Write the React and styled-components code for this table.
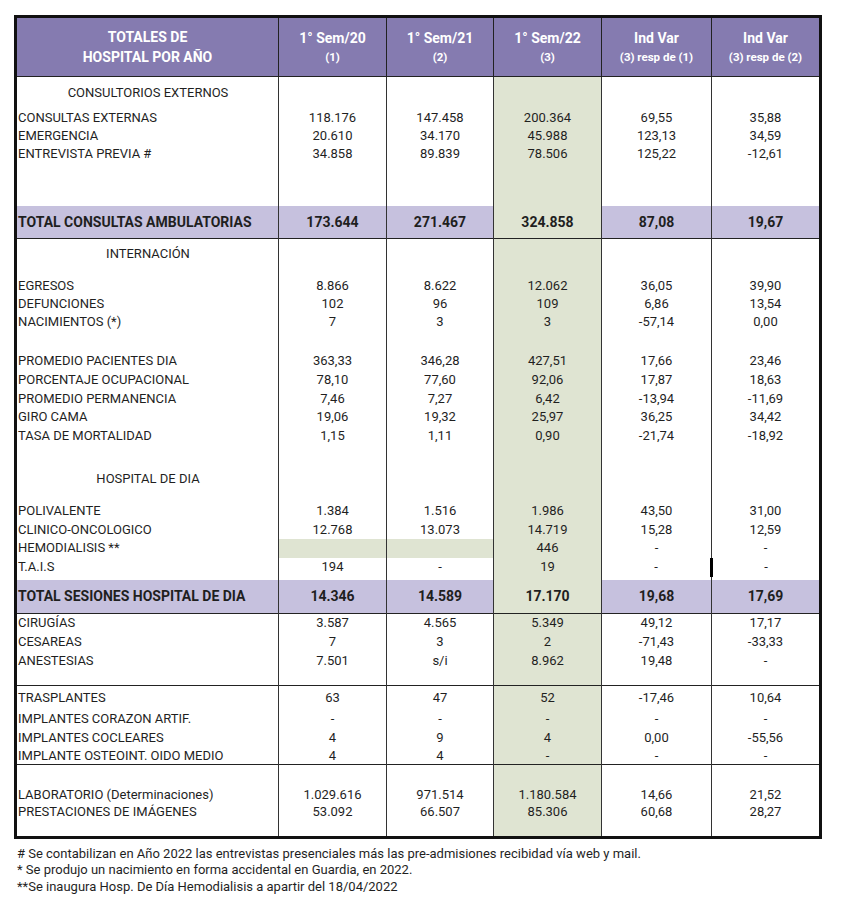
import React from "react";
import styled, { createGlobalStyle, css } from "styled-components";

const Global = createGlobalStyle`
  html, body { margin: 0; padding: 0; background: #fff; }
  body { font-family: Roboto, "Liberation Sans", sans-serif; color: #1f1f1f; }
`;

const Page = styled.div`
  padding: 15px 0 0 14px;
  width: 858px;
  box-sizing: border-box;
`;

const Table = styled.table`
  border-collapse: collapse;
  table-layout: fixed;
  width: 808px;
  border: 3px solid #111;
`;

const HeadRow = styled.tr`
  height: 60px;
  background: #857bb0;
`;

const HeadCell = styled.th`
  padding: 0;
  color: #fff;
  font-weight: 700;
  font-size: 14px;
  line-height: 20px;
  text-align: center;
  vertical-align: middle;
  border-left: 1px solid #222;
  border-bottom: 1px solid #222;
  &:first-child { border-left: none; }
`;

const Sub = styled.span`
  display: block;
  font-size: 11.5px;
  line-height: 18px;
`;

const Row = styled.tr`
  height: ${(p) => p.$h}px;
  ${(p) => p.$line && css`border-bottom: 1px solid #222;`}
`;

const LabelCell = styled.td`
  padding: 0 0 0 1px;
  font-size: ${(p) => (p.$total ? "14px" : "13px")};
  font-weight: ${(p) => (p.$total ? 700 : 400)};
  line-height: 16px;
  white-space: nowrap;
  text-align: ${(p) => (p.$title ? "center" : "left")};
  background: ${(p) => (p.$total ? "#c6c1de" : "#fff")};
  vertical-align: middle;
`;

const NumCell = styled.td`
  padding: 0;
  font-size: ${(p) => (p.$total ? "14px" : "13px")};
  font-weight: ${(p) => (p.$total ? 700 : 400)};
  line-height: 16px;
  text-align: center;
  white-space: nowrap;
  vertical-align: middle;
  border-left: ${(p) => (p.$heavy ? "3px solid #000" : "1px solid #333")};
  background: ${(p) =>
    p.$green ? "#dfe4d2" : p.$total ? "#c6c1de" : "#fff"};
`;

const Notes = styled.div`
  padding: 7px 0 0 3px;
  font-size: 13px;
  line-height: 16.5px;
  color: #1f1f1f;
`;

const rows = [
  { title: "CONSULTORIOS EXTERNOS", h: 32 },
  { label: "CONSULTAS EXTERNAS", v: ["118.176", "147.458", "200.364", "69,55", "35,88"], h: 18 },
  { label: "EMERGENCIA", v: ["20.610", "34.170", "45.988", "123,13", "34,59"], h: 18 },
  { label: "ENTREVISTA PREVIA #", v: ["34.858", "89.839", "78.506", "125,22", "-12,61"], h: 18 },
  { h: 43 },
  { label: "TOTAL CONSULTAS AMBULATORIAS", v: ["173.644", "271.467", "324.858", "87,08", "19,67"], h: 33, total: true, line: true },
  { title: "INTERNACIÓN", h: 30 },
  { h: 8 },
  { label: "EGRESOS", v: ["8.866", "8.622", "12.062", "36,05", "39,90"], h: 18 },
  { label: "DEFUNCIONES", v: ["102", "96", "109", "6,86", "13,54"], h: 18 },
  { label: "NACIMIENTOS (*)", v: ["7", "3", "3", "-57,14", "0,00"], h: 19 },
  { h: 20 },
  { label: "PROMEDIO PACIENTES DIA", v: ["363,33", "346,28", "427,51", "17,66", "23,46"], h: 19 },
  { label: "PORCENTAJE OCUPACIONAL", v: ["78,10", "77,60", "92,06", "17,87", "18,63"], h: 19 },
  { label: "PROMEDIO PERMANENCIA", v: ["7,46", "7,27", "6,42", "-13,94", "-11,69"], h: 18 },
  { label: "GIRO CAMA", v: ["19,06", "19,32", "25,97", "36,25", "34,42"], h: 19 },
  { label: "TASA DE MORTALIDAD", v: ["1,15", "1,11", "0,90", "-21,74", "-18,92"], h: 19 },
  { h: 18 },
  { title: "HOSPITAL DE DIA", h: 30 },
  { h: 8 },
  { label: "POLIVALENTE", v: ["1.384", "1.516", "1.986", "43,50", "31,00"], h: 19 },
  { label: "CLINICO-ONCOLOGICO", v: ["12.768", "13.073", "14.719", "15,28", "12,59"], h: 18 },
  { label: "HEMODIALISIS **", v: ["", "", "446", "-", "-"], h: 19, greenCols: [0, 1] },
  { label: "T.A.I.S", v: ["194", "-", "19", "-", "-"], h: 19, heavy: 4 },
  { h: 3 },
  { label: "TOTAL SESIONES HOSPITAL DE DIA", v: ["14.346", "14.589", "17.170", "19,68", "17,69"], h: 34, total: true, line: true },
  { label: "CIRUGÍAS", v: ["3.587", "4.565", "5.349", "49,12", "17,17"], h: 19 },
  { label: "CESAREAS", v: ["7", "3", "2", "-71,43", "-33,33"], h: 19 },
  { label: "ANESTESIAS", v: ["7.501", "s/i", "8.962", "19,48", "-"], h: 19 },
  { h: 15, line: true },
  { label: "TRASPLANTES", v: ["63", "47", "52", "-17,46", "10,64"], h: 24 },
  { label: "IMPLANTES CORAZON ARTIF.", v: ["-", "-", "-", "-", "-"], h: 19 },
  { label: "IMPLANTES COCLEARES", v: ["4", "9", "4", "0,00", "-55,56"], h: 19 },
  { label: "IMPLANTE OSTEOINT. OIDO MEDIO", v: ["4", "4", "-", "-", "-"], h: 15, line: true },
  { h: 22 },
  { label: "LABORATORIO (Determinaciones)", v: ["1.029.616", "971.514", "1.180.584", "14,66", "21,52"], h: 18 },
  { label: "PRESTACIONES DE IMÁGENES", v: ["53.092", "66.507", "85.306", "60,68", "28,27"], h: 16 },
  { h: 17 },
];

const heads = [
  { top: "1° Sem/20", sub: "(1)" },
  { top: "1° Sem/21", sub: "(2)" },
  { top: "1° Sem/22", sub: "(3)" },
  { top: "Ind Var", sub: "(3) resp de (1)" },
  { top: "Ind Var", sub: "(3) resp de (2)" },
];

export default function App() {
  return (
    <Page>
      <Global />
      <Table>
        <colgroup>
          <col style={{ width: 263 }} />
          <col style={{ width: 108 }} />
          <col style={{ width: 107 }} />
          <col style={{ width: 108 }} />
          <col style={{ width: 110 }} />
          <col />
        </colgroup>
        <thead>
          <HeadRow>
            <HeadCell>
              TOTALES DE
              <br />
              HOSPITAL POR AÑO
            </HeadCell>
            {heads.map((h, i) => (
              <HeadCell key={i}>
                {h.top}
                <Sub>{h.sub}</Sub>
              </HeadCell>
            ))}
          </HeadRow>
        </thead>
        <tbody>
          {rows.map((r, i) => (
            <Row key={i} $h={r.h} $line={r.line}>
              <LabelCell $title={!!r.title} $total={r.total}>
                {r.title || r.label || ""}
              </LabelCell>
              {[0, 1, 2, 3, 4].map((c) => (
                <NumCell
                  key={c}
                  $total={r.total}
                  $green={c === 2 || (r.greenCols && r.greenCols.includes(c))}
                  $heavy={r.heavy === c}
                >
                  {r.v ? r.v[c] : ""}
                </NumCell>
              ))}
            </Row>
          ))}
        </tbody>
      </Table>
      <Notes>
        # Se contabilizan en Año 2022 las entrevistas presenciales más las pre-admisiones recibidad vía web y mail.
        <br />* Se produjo un nacimiento en forma accidental en Guardia, en 2022.
        <br />
        **Se inaugura Hosp. De Día Hemodialisis a apartir del 18/04/2022
      </Notes>
    </Page>
  );
}
